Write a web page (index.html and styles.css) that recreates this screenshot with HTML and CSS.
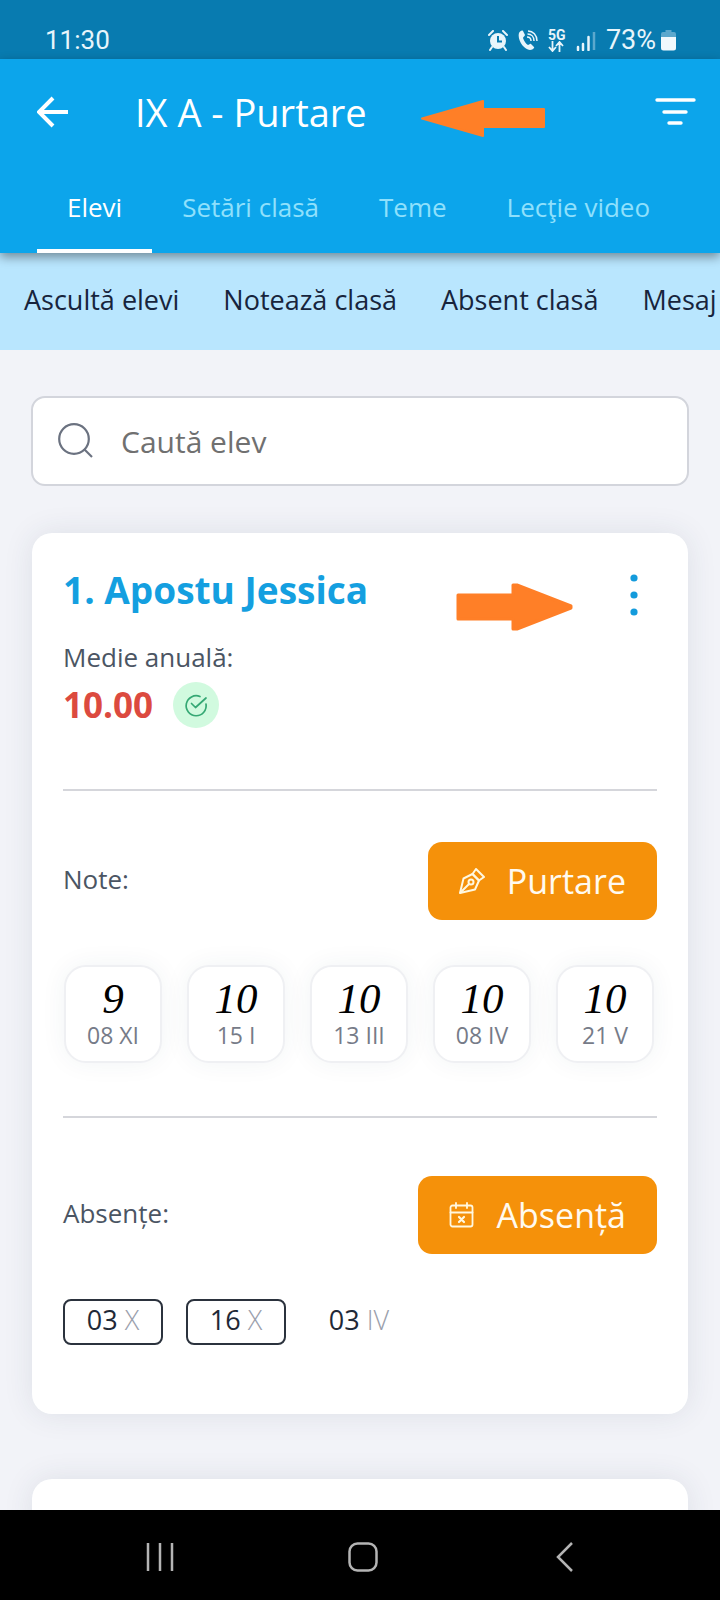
FILE: index.html
```html
<!DOCTYPE html>
<html lang="ro">
<head>
  <meta charset="UTF-8" />
  <title>IX A - Purtare</title>
  <meta name="viewport" content="width=device-width, initial-scale=1" />
  <link rel="stylesheet" href="styles.css">
</head>
<body>
  <div class="status-bar">
    <span class="clock">11:30</span>
    <div class="status-icons">
      <svg width="20" height="21" viewBox="0 0 20 21">
        <circle cx="10" cy="11" r="8" fill="#e8f5fb"/>
        <path d="M1 5l4-4M19 5l-4-4M4 17l-2 3M16 17l2 3" stroke="#e8f5fb" stroke-width="2" stroke-linecap="round"/>
        <path d="M10 6v5.500h4" fill="none" stroke="#087bb0" stroke-width="2"/>
      </svg>
      <svg width="20" height="21" viewBox="0 0 20 21">
        <path d="M1 3c1-2 3-3 4-2l2 4c0 1-2 2-2 3 1 3 3 6 5 7 1 0 2-2 3-1l3 3c1 1-2 3-4 3C6 20-1 10 1 3z" fill="#e8f5fb"/>
        <path d="M9 7c3 0 4 2 4 4M9.500 4c4 0 6.500 3 6.500 7M10 1c5 0 9 4 9 10" fill="none" stroke="#e8f5fb" stroke-width="1.500"/>
      </svg>
      <div class="network">
        <span>5G</span>
        <svg width="16" height="11" viewBox="0 0 16 11">
          <path d="M4.500 0v9M1 6l3.500 4L8 6M11.500 11V2M8 5l3.500-4L15 5" fill="none" stroke="#e8f5fb" stroke-width="1.800"/>
        </svg>
      </div>
      <svg width="20" height="20" viewBox="0 0 20 20">
        <path d="M2 16v3M7 13v6M12.500 6v13" stroke="#e8f5fb" stroke-width="2.500" stroke-linecap="round"/>
        <path d="M18 1v18" stroke="#5ba8cd" stroke-width="2.500"/>
      </svg>
      <span class="battery-text">73%</span>
      <svg width="15" height="21" viewBox="0 0 15 21">
        <path d="M4.500 0h6v2H13a2 2 0 0 1 2 2v4H0V4a2 2 0 0 1 2-2h2.500z" fill="#5ba8cd"/>
        <path d="M0 7h15v11a2.500 2.500 0 0 1-2.500 2.500h-10A2.500 2.500 0 0 1 0 18z" fill="#f0f9fd"/>
      </svg>
    </div>
  </div>

  <header>
    <div class="title-row">
      <button class="icon-btn" aria-label="Înapoi">
        <svg width="32" height="32" viewBox="0 0 32 32">
          <path d="M31 16H3M16 2L2 16l14 14" fill="none" stroke="#fff" stroke-width="4"/>
        </svg>
      </button>
      <h1>IX A - Purtare</h1>
      <button class="icon-btn" aria-label="Filtru">
        <svg width="41" height="28" viewBox="0 0 41 28">
          <path d="M2 2h37M9 14h22M14 25h12" stroke="#fff" stroke-width="3.400" stroke-linecap="round"/>
        </svg>
      </button>
    </div>
    <nav class="tabs">
      <a class="active" href="#elevi">Elevi</a>
      <a href="#setari">Setări clasă</a>
      <a href="#teme">Teme</a>
      <a href="#video">Lecţie video</a>
    </nav>
    <svg class="arrow-title" width="125" height="37" viewBox="0 0 125 37">
      <path d="M1 18.500L62 1v8h61v18H62v9z" fill="#ff7f27" stroke="#ff7f27" stroke-width="2" stroke-linejoin="round"/>
    </svg>
  </header>

  <nav class="actions">
    <a href="#asculta">Ascultă elevi</a>
    <a href="#noteaza">Notează clasă</a>
    <a href="#absent">Absent clasă</a>
    <a href="#mesaj">Mesaj</a>
  </nav>

  <main>
    <label class="search">
      <svg width="36" height="36" viewBox="0 0 36 36">
        <path d="M26 26l8 8" stroke="#6b7280" stroke-width="2.200"/>
        <circle cx="16" cy="16" r="14.800" fill="none" stroke="#6b7280" stroke-width="2.200"/>
      </svg>
      <input type="text" placeholder="Caută elev" aria-label="Caută elev" />
    </label>

    <section class="card">
      <div class="card-head">
        <h2>1. Apostu Jessica</h2>
        <button class="icon-btn" aria-label="Meniu elev">
          <svg width="8" height="42" viewBox="0 0 8 42">
            <circle cx="4" cy="4" r="3.600" fill="#149bdc"/>
            <circle cx="4" cy="21" r="3.600" fill="#149bdc"/>
            <circle cx="4" cy="38" r="3.600" fill="#149bdc"/>
          </svg>
        </button>
      </div>
      <svg class="arrow-menu" width="117" height="48" viewBox="0 0 117 48">
        <path d="M2 12h55V2h4l54 21v2L61 46h-4V36H2z" fill="#ff7f27" stroke="#ff7f27" stroke-width="3" stroke-linejoin="round"/>
      </svg>
      <p class="label">Medie anuală:</p>
      <div class="average">
        <strong>10.00</strong>
        <span class="check">
          <svg width="24" height="24" viewBox="0 0 24 24">
            <path d="M16 3.500A10 10 0 1 0 22 11M7.500 10.500l4 4L22 5" fill="none" stroke="#35a874" stroke-width="1.700" stroke-linecap="round" stroke-linejoin="round"/>
          </svg>
        </span>
      </div>

      <hr>

      <div class="row">
        <span class="label">Note:</span>
        <button class="btn">
          <svg width="26" height="26" viewBox="0 0 26 26" fill="none" stroke="#fff8e0" stroke-width="2" stroke-linejoin="round">
            <path d="M1 25L4.500 10.500 13.500 6 20 12.500 16 21.500z"/>
            <path d="M13.500 6L17 1l8 8-5 3.500zM1 25l9.500-9.500"/>
            <circle cx="12" cy="14" r="2.500"/>
          </svg>
          Purtare
        </button>
      </div>
      <div class="marks">
        <div class="mark"><em>9</em><span>08 XI</span></div>
        <div class="mark"><em>10</em><span>15 I</span></div>
        <div class="mark"><em>10</em><span>13 III</span></div>
        <div class="mark"><em>10</em><span>08 IV</span></div>
        <div class="mark"><em>10</em><span>21 V</span></div>
      </div>

      <hr>

      <div class="row">
        <span class="label">Absențe:</span>
        <button class="btn">
          <svg width="26" height="26" viewBox="0 0 26 26" fill="none" stroke="#fff8e0" stroke-width="1.800" stroke-linecap="round">
            <rect x="1.500" y="3.500" width="22" height="21" rx="2"/>
            <path d="M1.500 10.500h22M7 1v5M18 1v5"/>
            <path d="M10 15l5 5M15 15l-5 5" stroke-width="2.200"/>
          </svg>
          Absență
        </button>
      </div>
      <div class="absences">
        <span class="absence boxed">03 <i>X</i></span>
        <span class="absence boxed">16 <i>X</i></span>
        <span class="absence">03 <i>IV</i></span>
      </div>
    </section>

    <section class="card"></section>
  </main>

  <footer class="system-nav">
    <button class="icon-btn" aria-label="Recente">
      <svg width="30" height="30" viewBox="0 0 30 30">
        <path d="M3 1v28M15 1v28M27 1v28" stroke="#b4b4b4" stroke-width="2.500"/>
      </svg>
    </button>
    <button class="icon-btn" aria-label="Acasă">
      <svg width="30" height="30" viewBox="0 0 30 30">
        <rect x="1.500" y="1.500" width="27" height="27" rx="8" fill="none" stroke="#b4b4b4" stroke-width="2.500"/>
      </svg>
    </button>
    <button class="icon-btn" aria-label="Înapoi">
      <svg width="30" height="30" viewBox="0 0 30 30">
        <path d="M22 1L8 15l14 14" fill="none" stroke="#b4b4b4" stroke-width="2.500"/>
      </svg>
    </button>
  </footer>
</body>
</html>
```
FILE: styles.css
```css
* { box-sizing: border-box; }
body {
  margin: 0; height: 100vh; overflow: hidden;
  display: flex; flex-direction: column;
  background: #f2f3f8; color: #1f2937;
  font-family: 'Open Sans', 'Noto Sans', sans-serif;
}
svg { display: block; flex: none; }
h1, h2, p { margin: 0; }
a { text-decoration: none; }
button { font-family: inherit; border: none; cursor: pointer; }
.icon-btn { background: none; padding: 0; }

/* phone status bar */
.status-bar {
  display: flex; justify-content: space-between; align-items: flex-end;
  padding: 22px 44px 0 45px; height: 59px; flex: none;
  background: #087bb0; color: #e8f5fb;
  font-family: Roboto, sans-serif; font-size: 26px; line-height: 37px;
}
.status-icons { display: flex; align-items: center; gap: 10px; }
.network { width: 18px; font-size: 14px; line-height: 12px; font-weight: bold; }
.battery-text { margin-right: -5px; font-size: 27px; }

/* header */
header {
  position: relative; z-index: 1; flex: none;
  background: #0ca5eb; color: white;
  box-shadow: 0 4px 10px rgba(0,0,0,0.4);
}
.title-row {
  display: flex; align-items: center;
  height: 105px; padding: 0 24px 0 37px;
}
.title-row h1 { flex: 1; margin-left: 66px; font-size: 38px; font-weight: normal; }
.tabs { display: flex; padding-left: 37px; font-feature-settings: "locl" 0; }
.tabs a {
  padding: 24px 30px 23px; color: #8fe0fc;
  font-size: 26px; line-height: 38px; white-space: nowrap;
  border-bottom: 4px solid transparent;
}
.tabs .active { color: white; border-bottom-color: white; }
.arrow-title { position: absolute; top: 41px; right: 174px; }

.actions {
  display: flex; gap: 44px; flex: none;
  padding: 24px; height: 97px;
  background: #b9e6fe; overflow: hidden;
}
.actions a { color: #17243c; font-size: 27px; line-height: 46px; white-space: nowrap; }

/* content */
main { flex: 1; min-height: 0; overflow: hidden; padding: 46px 31px 0; }
.search {
  display: flex; align-items: center; gap: 27px;
  height: 90px; padding: 0 25px;
  background: white; border: 2px solid #d3d5dc; border-radius: 14px;
}
.search input {
  flex: 1; min-width: 0; border: none; outline: none; padding: 0;
  background: none; font-family: inherit; font-size: 30px;
}
.search input::placeholder { color: #707070; opacity: 1; }

.card {
  position: relative; margin: 47px 1px 65px; padding: 31px 31px 69px;
  background: white; border-radius: 20px;
  box-shadow: 0 0 30px rgba(40,60,80,0.1);
}
.card-head { display: flex; justify-content: space-between; align-items: flex-start; }
.card-head h2 { color: #149fe0; font-size: 37px; line-height: 52px; }
.card-head .icon-btn { padding: 10px 19px 0; }
.arrow-menu { position: absolute; top: 50px; right: 115px; }
.label { color: #4b5563; font-size: 26px; line-height: 40px; }
p.label { margin-top: 21px; }
.average { display: flex; align-items: center; gap: 20px; margin-top: 5px; }
.average strong { color: #dc4a3f; font-size: 35px; line-height: 46px; }
.check {
  display: flex; align-items: center; justify-content: center;
  width: 46px; height: 46px; border-radius: 50%; background: #d1fadf;
}
hr { margin: 61px 0 51px; border: none; border-top: 2px solid #d5d6db; }
.row { display: flex; justify-content: space-between; align-items: center; }
.row .label { padding-bottom: 4px; }
.btn {
  display: flex; align-items: center; gap: 22px;
  height: 78px; padding: 0 31px; border-radius: 14px;
  background: #f5910a; color: #fffaf0;
  font-size: 34px; font-weight: 500;
}

.marks { display: flex; gap: 25px; margin: 45px 0 53px 1px; }
.mark {
  width: 98px; height: 98px; padding-top: 10px; text-align: center;
  background: white; border: 2px solid #eff0f3; border-radius: 22px;
  box-shadow: 0 0 26px rgba(40,60,80,0.06);
}
.mark em {
  display: block; color: black;
  font-family: 'Liberation Serif', serif; font-size: 43px; line-height: 44px;
}
.mark span { display: block; color: #767b88; font-size: 23px; line-height: 28px; }
.marks + hr { margin: 53px 0 58px; }

.absences { display: flex; gap: 23px; margin-top: 45px; }
.absence {
  width: 100px; height: 46px; text-align: center;
  font-size: 27px; line-height: 38px; white-space: nowrap;
  border: 2px solid transparent; border-radius: 8px;
}
.boxed { border-color: #2b323d; }
.absence i { color: #9aa0ac; font-style: normal; font-weight: 300; }

/* android buttons */
.system-nav {
  display: flex; justify-content: space-between; align-items: center;
  height: 90px; padding: 4px 140px 0 145px; flex: none; background: black;
}
```
